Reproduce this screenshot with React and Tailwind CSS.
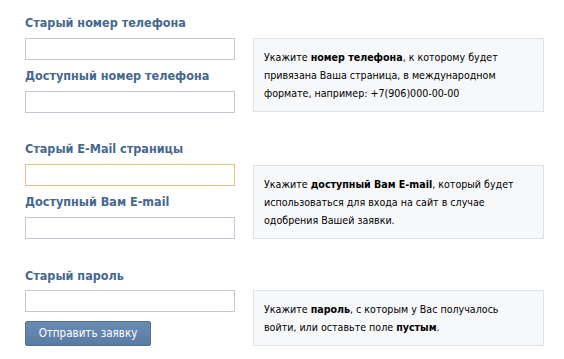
import React from 'react';

const font = { fontFamily: '"DejaVu Sans Condensed", "DejaVu Sans", Tahoma, sans-serif' };

const Label = ({ children, className = '' }) => (
  <div className={`h-4 leading-4 text-[12.5px] font-bold text-[#45688e] ${className}`}>{children}</div>
);

const Field = ({ focused }) => (
  <input
    type="text"
    className={`block w-[210px] h-[22px] bg-white outline-none border ${
      focused ? 'border-[#e2c27e]' : 'border-[#c0cad5]'
    }`}
  />
);

const Info = ({ children, className = '' }) => (
  <div
    className={`w-[291px] ml-[18px] bg-[#f7f8fa] border border-[#dfe3e9] px-[10px] py-[9px] text-[10.6px] leading-[18px] text-[#000] ${className}`}
  >
    {children}
  </div>
);

export default function App() {
  return (
    <div className="w-[564px] h-[359px] bg-white pl-[25px] pt-[15px]" style={font}>
      {/* Телефон */}
      <Label className="mb-[7px]">Старый номер телефона</Label>
      <div className="flex items-start">
        <div className="flex flex-col">
          <Field />
          <Label className="mt-2 mb-[7px]">Доступный номер телефона</Label>
          <Field />
        </div>
        <Info className="h-[74px]">
          Укажите <b>номер телефона</b>, к которому будет привязана Ваша страница, в международном
          формате, например: +7(906)000-00-00
        </Info>
      </div>

      {/* E-Mail */}
      <Label className="mt-7 mb-[7px]">Старый E-Mail страницы</Label>
      <div className="flex items-start">
        <div className="flex flex-col">
          <Field focused />
          <Label className="mt-2 mb-[7px]">Доступный Вам E-mail</Label>
          <Field />
        </div>
        <Info className="h-[74px] mt-px">
          Укажите <b>доступный Вам E-mail</b>, который будет использоваться для входа на сайт в
          случае одобрения Вашей заявки.
        </Info>
      </div>

      {/* Пароль */}
      <Label className="mt-[29px] mb-[6px]">Старый пароль</Label>
      <div className="flex items-start">
        <div className="flex flex-col">
          <Field />
          <button className="mt-[9px] w-[126px] h-[25px] rounded-[2px] border border-[#4e6f96] bg-gradient-to-b from-[#6a8cb3] to-[#5a7ca4] text-white text-[11.5px] leading-none">
            Отправить заявку
          </button>
        </div>
        <Info className="h-[56px]">
          Укажите <b>пароль</b>, с которым у Вас получалось войти, или оставьте поле <b>пустым</b>.
        </Info>
      </div>
    </div>
  );
}
